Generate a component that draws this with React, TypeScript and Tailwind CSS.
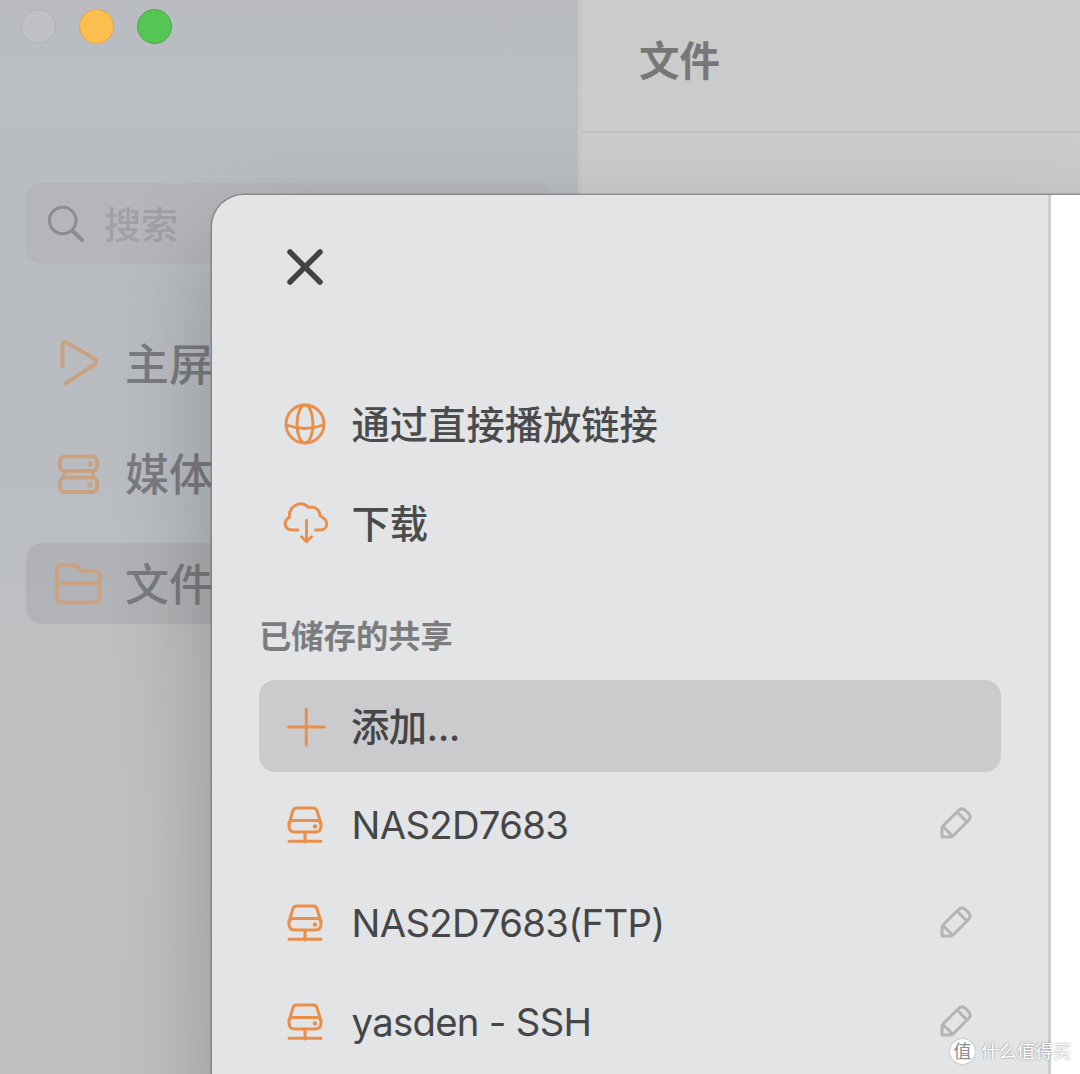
import React from "react";

const svgBase = {
  fill: "none",
  stroke: "currentColor",
  strokeLinecap: "round" as const,
  strokeLinejoin: "round" as const,
};

const SearchIcon = () => (
  <svg className="h-[40px] w-[40px] text-[#8c8d90]" viewBox="0 0 40 40" {...svgBase} strokeWidth="3">
    <circle cx="16.700" cy="16.500" r="13.3" />
    <path d="M26.3 26.500 36 36" strokeWidth="4" />
  </svg>
);

const PlayIcon = () => (
  <svg className="h-12 w-12" viewBox="0 0 48 48" {...svgBase} strokeWidth="4">
    <path d="M8.500 26.500V6Q8.500 .5 13 2.800L40.500 18.700Q44.500 21.800 40.500 24.500L11.500 43.500" />
  </svg>
);

const MediaIcon = () => (
  <svg className="h-12 w-12" viewBox="0 0 48 48" {...svgBase} strokeWidth="4">
    <rect x="6" y="6.500" width="37" height="14.500" rx="4.500" />
    <rect x="6" y="27.500" width="37" height="14.500" rx="4.500" />
    <path d="M10 21V27.500M39 21V27.500" strokeWidth="3.500" />
    <circle cx="36" cy="14" r="2.800" fill="currentColor" stroke="none" />
    <circle cx="36" cy="34.700" r="2.800" fill="currentColor" stroke="none" />
  </svg>
);

const FolderIcon = () => (
  <svg className="h-12 w-12" viewBox="0 0 48 48" {...svgBase} strokeWidth="4">
    <path d="M3 11Q3 5 9 5H18Q20.500 5 22.500 6.500L26.500 9.500Q28.500 11 31 11H39.500Q45.500 11 45.500 17V36.500Q45.500 42.500 39.500 42.500H9Q3 42.500 3 36.500ZM3 23H45.500" />
  </svg>
);

const CloseIcon = () => (
  <svg className="h-[36px] w-[36px] text-[#434345]" viewBox="0 0 36 36" {...svgBase} strokeWidth="5.500">
    <path d="M3 3 33 33M33 3 3 33" />
  </svg>
);

const GlobeIcon = () => (
  <svg className="h-12 w-12" viewBox="0 0 48 48" {...svgBase} strokeWidth="2.900">
    <circle cx="24" cy="23" r="19" />
    <ellipse cx="24" cy="23" rx="8" ry="19" />
    <path d="M5.500 24Q24 31 42.500 24" />
  </svg>
);

const CloudIcon = () => (
  <svg className="h-12 w-12" viewBox="0 0 48 48" {...svgBase} strokeWidth="2.900">
    <path d="M17 30H12C2 30 2.500 19.500 8.500 17.500C7.500 6 19.500 -.5 27.500 7.500C33 5.500 39 9.500 39 16C48.500 20 47.500 30 39 30H34.500M25.500 20.500V41.500M20.500 36.800 25.500 41.800 30.500 36.800" />
  </svg>
);

const PlusIcon = () => (
  <svg className="h-12 w-12" viewBox="0 0 48 48" {...svgBase} strokeWidth="3">
    <path d="M25.300 7V43M7.500 25H43.300" />
  </svg>
);

const DriveIcon = () => (
  <svg className="h-12 w-12" viewBox="0 0 48 48" {...svgBase} strokeWidth="3">
    <path d="M8 23 12 9.500Q13 7 16 7H32Q35 7 36 9.500L40 23" />
    <path d="M12 19.500H36Q40 19.500 40 23.500V25Q40 31 34 31H14Q8 31 8 25V23.500Q8 19.500 12 19.500ZM24 31V41M8 40.300H40" />
    <circle cx="34" cy="25.500" r="2.200" fill="currentColor" stroke="none" />
  </svg>
);

const PencilIcon = () => (
  <svg className="mb-[3px] h-8 w-8 text-[#b3b4b6]" viewBox="0 0 32 32" {...svgBase} strokeWidth="3">
    <path d="M2 30V21.500Q2 20 3.200 18.800L18.500 3.500Q21.500 .5 25 3L29 7Q31.500 10.500 28.500 13.500L13.500 28.500Q12 30 10.500 30ZM3 19.500 12.500 29M17 5 27 15" />
  </svg>
);

type RowProps = { icon: React.ReactNode; label: string; active?: boolean; editable?: boolean };

const SheetRow = ({ icon, label, active, editable }: RowProps) => (
  <div className={active ? "flex h-[92px] items-center rounded-[16px] bg-[#cbcbcd] pl-[22px] pr-[29px]" : "flex h-[92px] items-center pl-[22px] pr-[29px]"}>
    <span className="text-[#e98f4c]">{icon}</span>
    <span
      className={
        editable
          ? "ml-[22.500px] flex-1 whitespace-nowrap tracking-[-0.7px]"
          : active
            ? "ml-[22px] flex-1 whitespace-nowrap pt-[2px] font-medium tracking-[-0.5px]"
            : "ml-[22.500px] flex-1 whitespace-nowrap font-medium"
      }
    >
      {label}
    </span>
    {editable && <PencilIcon />}
  </div>
);

const NavRow = ({ icon, label, active }: RowProps) => (
  <div className={active ? "flex h-[81px] items-center rounded-[16px] bg-black/[0.06] pl-[28px]" : "flex h-[81px] items-center pl-[28px]"}>
    <span className="text-[#c9a183]">{icon}</span>
    <span className="ml-[23px] whitespace-nowrap pt-[3px]">{label}</span>
  </div>
);

export default function App() {
  return (
    <div className="relative flex h-[1074px] w-[1080px] overflow-hidden bg-[#cbcbcb] font-['Inter','Noto_Sans_CJK_SC',sans-serif]">
      <aside className="flex w-[578px] flex-col bg-[linear-gradient(180deg,#babcc1_0px,#b9bdc2_180px,#b9bdc2_480px,#bebfc1_640px,#c1c1c3_820px,#c0c0c2_1074px)] pl-[26px] pr-[25px] pt-[9px]">
        <div className="ml-[-5px] flex gap-[23px]">
          <span className="h-[35px] w-[35px] rounded-full border border-[#b0b1b5] bg-[#c0c1c5]" />
          <span className="h-[35px] w-[35px] rounded-full border border-[#d9a75a] bg-[#fcbf4e]" />
          <span className="h-[35px] w-[35px] rounded-full border border-[#4aa948] bg-[#55c553]" />
        </div>
        <div className="mt-[139px] flex h-[81px] items-center rounded-[16px] bg-[#b5b6ba] pl-[20px]">
          <SearchIcon />
          <span className="ml-[18px] pt-[4px] text-[37px] font-medium leading-none text-[#a0a1a5]">搜索</span>
        </div>
        <nav className="mt-[59px] flex flex-col gap-[29px] text-[44px] font-medium leading-none text-[#7a7b7e]">
          <NavRow icon={<PlayIcon />} label="主屏幕" />
          <NavRow icon={<MediaIcon />} label="媒体库" />
          <NavRow icon={<FolderIcon />} label="文件" active />
        </nav>
      </aside>
      <main className="flex-1 border-l-3 border-[#c6c7c9]">
        <header className="flex h-[133px] items-center border-b-2 border-[#c1c1c1] pb-[6px] pl-[58px]">
          <h1 className="text-[40.500px] font-bold leading-none text-[#777777]">文件</h1>
        </header>
      </main>

      <section className="absolute left-[212px] top-[195px] flex h-[900px] w-[900px] overflow-hidden rounded-tl-[32px] bg-[#e3e4e6] shadow-[0_0_0_1.500px_rgba(110,110,112,0.6),0_44px_100px_rgba(0,0,0,0.24)]">
        <div className="flex w-[839px] flex-col border-r-3 border-[#cdcece] pl-[47px] pr-[47px]">
          <button className="ml-[28px] mt-[54px] h-[36px] w-[36px]">
            <CloseIcon />
          </button>
          <div className="mt-[94px] flex flex-col gap-[7px] text-[38.300px] leading-none text-[#4a4b4d]">
            <SheetRow icon={<GlobeIcon />} label="通过直接播放链接" />
            <SheetRow icon={<CloudIcon />} label="下载" />
          </div>
          <h2 className="mt-[51px] flex h-[32px] items-center text-[32.300px] font-bold leading-none text-[#7b7c7e]">已储存的共享</h2>
          <div className="mt-[27px] flex flex-col gap-[6.700px] text-[38.300px] leading-none text-[#454648]">
            <SheetRow icon={<PlusIcon />} label="添加..." active />
            <SheetRow icon={<DriveIcon />} label="NAS2D7683" editable />
            <SheetRow icon={<DriveIcon />} label="NAS2D7683(FTP)" editable />
            <SheetRow icon={<DriveIcon />} label="yasden - SSH" editable />
          </div>
        </div>
        <div className="flex-1 bg-white" />
      </section>

      <div className="absolute bottom-[10px] right-[9px] flex items-center gap-[6px] text-[18px] leading-none text-white [text-shadow:0_0_2px_rgba(0,0,0,0.5)]">
        <span className="flex h-[25px] w-[25px] items-center justify-center rounded-full bg-white text-[18px] text-[#8b8c8e] shadow-[0_0_2px_rgba(0,0,0,0.35)] [text-shadow:none]">值</span>
        <span>什么值得买</span>
      </div>
    </div>
  );
}
